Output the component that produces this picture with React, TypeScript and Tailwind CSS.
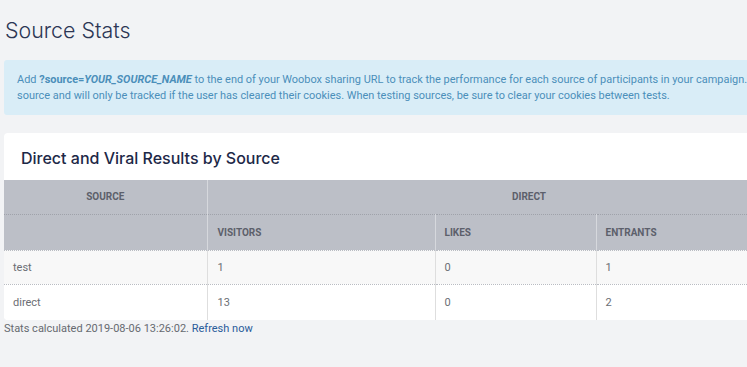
import React from "react";

const rows = [
  { source: "test", visitors: "1", likes: "0", entrants: "1" },
  { source: "direct", visitors: "13", likes: "0", entrants: "2" },
];

export default function App() {
  return (
    <div className="w-[747px] h-[367px] overflow-hidden bg-[#f2f3f5]" style={{ fontFamily: "Roboto, 'Liberation Sans', sans-serif" }}>
      <div className="w-[900px] pl-[4px]">
        <h1 className="pt-[17px] pl-[1px] h-[60px] text-[21.4px] leading-[26px] font-light text-[#2c3654]" style={{ fontFamily: "Inter, 'Open Sans', sans-serif" }}>
          Source Stats
        </h1>
        <div className="h-[55px] rounded-[3px] bg-[#d9edf7] pl-[13px] pt-[12px] text-[10.95px] leading-[16px] text-[#4b8fba] whitespace-nowrap">
          <div>
            Add <b className="font-bold">?source=<i>YOUR_SOURCE_NAME</i></b> to the end of your Woobox sharing URL to track the performance for each source of participants in your campaign.
          </div>
          <div>
            source and will only be tracked if the user has cleared their cookies. When testing sources, be sure to clear your cookies between tests.
          </div>
        </div>
        <div className="mt-[18px] rounded-[4px] bg-white overflow-hidden">
          <h2 className="h-[47px] pl-[17px] pt-[15px] text-[16px] leading-[21px] font-medium text-[#1d2847]" style={{ fontFamily: "Inter, 'Open Sans', sans-serif" }}>
            Direct and Viral Results by Source
          </h2>
          <table className="w-full table-fixed border-collapse text-[11px]">
            <colgroup>
              <col className="w-[203px]" />
              <col className="w-[228px]" />
              <col className="w-[161px]" />
              <col className="w-[255px]" />
              <col />
            </colgroup>
            <thead className="bg-[#bcbfc7] text-[10px] font-bold uppercase text-[#5c606b]">
              <tr className="h-[34px]">
                <th className="text-center font-bold border-r border-[#d6d8dd]">Source</th>
                <th colSpan={3} className="text-center font-bold border-r border-[#d6d8dd]">Direct</th>
                <th></th>
              </tr>
              <tr className="h-[36px] border-t border-dotted border-[#9fa2aa]">
                <th className="border-r border-[#d6d8dd]"></th>
                <th className="text-left pl-[10px] font-bold border-r border-[#d6d8dd]">Visitors</th>
                <th className="text-left pl-[9px] font-bold border-r border-[#d6d8dd]">Likes</th>
                <th className="text-left pl-[9px] font-bold border-r border-[#d6d8dd]">Entrants</th>
                <th></th>
              </tr>
            </thead>
            <tbody className="text-[#6b6e74]">
              {rows.map((r, i) => (
                <tr key={r.source} className={`border-t border-dotted border-[#b9bcc2] ${i === 0 ? "h-[34px] bg-[#f8f8f8]" : "h-[36px] bg-white"}`}>
                  <td className="pl-[9px] pt-[2px] border-r border-[#dedede]">{r.source}</td>
                  <td className="pl-[10px] pt-[2px] border-r border-[#dedede]">{r.visitors}</td>
                  <td className="pl-[9px] pt-[2px] border-r border-[#dedede]">{r.likes}</td>
                  <td className="pl-[9px] pt-[2px] border-r border-[#dedede]">{r.entrants}</td>
                  <td></td>
                </tr>
              ))}
            </tbody>
          </table>
        </div>
        <div className="text-[11px] leading-[16px] text-[#666a70] mt-[1px]">
          Stats calculated 2019-08-06 13:26:02. <a className="text-[#2a5c9a]" href="#">Refresh now</a>
        </div>
      </div>
    </div>
  );
}
